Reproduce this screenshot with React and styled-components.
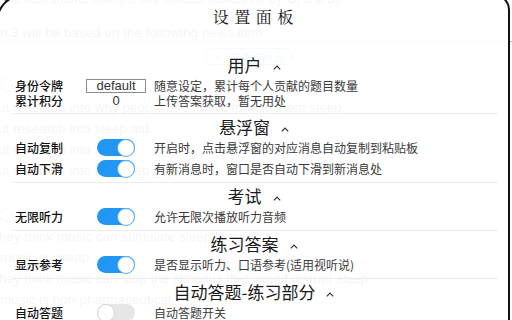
import React from 'react'
import styled, { createGlobalStyle } from 'styled-components'

const GlobalStyle = createGlobalStyle`
  html, body {
    margin: 0;
    padding: 0;
    width: 512px;
    height: 320px;
    overflow: hidden;
    background: #fff;
  }
  body {
    font-family: "Noto Sans CJK SC", "Noto Sans", sans-serif;
  }
`

const Screen = styled.div`
  position: relative;
  width: 512px;
  height: 320px;
  overflow: hidden;
`

/* exam page that sits behind the settings panel */
const Page = styled.div`
  display: flex;
  flex-direction: column;
  font-family: "Liberation Sans", Arial, sans-serif;
  font-size: 13.5px;
  color: #555;
  white-space: nowrap;
`
const Directions = styled.div`
  margin-top: -8px;
  height: 14px;
  line-height: 14px;
  font-size: 12px;
  padding-left: 4px;
`
const Heading = styled.div`
  margin-top: 18px;
  height: 17px;
  line-height: 17px;
  border-bottom: 1px solid #bbb;
`
const PillRow = styled.div`
  margin-top: 6px;
  height: 17px;
  display: flex;
  justify-content: center;
  padding-right: 14px;
`
const Pill = styled.div`
  display: flex;
  align-items: center;
  gap: 3px;
  padding: 0 8px;
  border: 1px solid #4a90e2;
  border-radius: 9px;
  color: #4a90e2;
  font-size: 11px;
  font-family: "Noto Sans CJK SC", sans-serif;
`
const PlayRow = styled.div`
  margin-top: ${p => p.$top}px;
  height: 14px;
  display: flex;
  align-items: center;
`
const PlayDot = styled.span`
  width: 14px;
  height: 14px;
  margin-left: -1px;
  border-radius: 50%;
  border: 1px solid #4a90e2;
  box-sizing: border-box;
`
const Options = styled.div`
  margin-top: ${p => p.$top}px;
  display: flex;
  flex-direction: column;
`
const Option = styled.div`
  height: 21px;
  line-height: 21px;
  margin-left: ${p => p.$shift || 0}px;
`

/* settings panel */
const Panel = styled.div`
  position: absolute;
  top: -6px;
  left: -4px;
  width: 514px;
  height: 345px;
  box-sizing: border-box;
  border: 2px solid #111;
  border-radius: 28px 16px 0 0;
  background: rgba(255, 255, 255, 0.94);
  display: flex;
  flex-direction: column;
  font-family: "Noto Sans CJK SC", "Noto Sans", sans-serif;
`
const Title = styled.div`
  height: 42px;
  line-height: 42px;
  text-align: center;
  font-family: "AR PL UKai CN", "KaiTi", "STKaiti", "Noto Serif CJK SC", "Noto Sans CJK SC", serif;
  font-size: 16px;
  letter-spacing: 5.5px;
  padding-left: 5.5px;
  color: #111;
`
const Sections = styled.div`
  margin: 14px 10px 0 15px;
  display: flex;
  flex-direction: column;
`
const Section = styled.section`
  display: flex;
  flex-direction: column;
  padding-bottom: ${p => p.$pb}px;
  border-bottom: ${p => (p.$last ? 'none' : '1px solid #ececec')};
`
const Header = styled.div`
  height: 25px;
  display: flex;
  align-items: center;
  justify-content: center;
  padding-right: 3px;
  font-size: 17px;
  color: #1a1a1a;
`
const Caret = styled.svg`
  margin-left: 11px;
  margin-top: 5px;
`
const Rows = styled.div`
  display: flex;
  flex-direction: column;
  gap: ${p => p.$gap}px;
`
const Row = styled.div`
  height: ${p => p.$h}px;
  display: grid;
  grid-template-columns: 63px 60px 1fr;
  column-gap: 8px;
  align-items: center;
  padding-left: 2px;
`
const Label = styled.span`
  font-size: 12px;
  font-weight: 500;
  color: #111;
  white-space: nowrap;
`
const Desc = styled.span`
  font-size: 12px;
  color: #3a3a3a;
  white-space: nowrap;
`
const TokenBox = styled.span`
  width: 60px;
  height: 14px;
  box-sizing: border-box;
  border: 1px solid #8a8a8a;
  font-family: "Liberation Sans", Arial, sans-serif;
  font-size: 13px;
  line-height: 12px;
  text-align: center;
  color: #333;
`
const Value = styled.span`
  text-align: center;
  font-family: "Liberation Sans", Arial, sans-serif;
  font-size: 13px;
  color: #333;
`
const Switch = styled.span`
  justify-self: center;
  width: 38px;
  height: 17px;
  border-radius: 9px;
  background: ${p => (p.$on ? '#2196f3' : '#e6e6e6')};
  display: flex;
  align-items: center;
  justify-content: ${p => (p.$on ? 'flex-end' : 'flex-start')};
`
const Knob = styled.span`
  width: 18px;
  height: 18px;
  border-radius: 50%;
  box-sizing: border-box;
  background: #fff;
  border: 1px solid ${p => (p.$on ? '#5aa9ee' : '#d4d4d4')};
`

const ChevronUp = () => (
  <Caret width="8" height="5" viewBox="0 0 8 5">
    <path d="M0.8 4.3 L4 1 L7.2 4.3" fill="none" stroke="#333" strokeWidth="1.2" />
  </Caret>
)

const Toggle = ({ on }) => (
  <Switch $on={on}>
    <Knob $on={on} />
  </Switch>
)

const settings = [
  {
    title: '用户',
    pb: 6,
    gap: 0,
    h: 15,
    rows: [
      { label: '身份令牌', control: <TokenBox>default</TokenBox>, desc: '随意设定，累计每个人贡献的题目数量' },
      { label: '累计积分', control: <Value>0</Value>, desc: '上传答案获取，暂无用处' },
    ],
  },
  {
    title: '悬浮窗',
    pb: 5,
    gap: 4,
    h: 17,
    rows: [
      { label: '自动复制', on: true, desc: '开启时，点击悬浮窗的对应消息自动复制到粘贴板' },
      { label: '自动下滑', on: true, desc: '有新消息时，窗口是否自动下滑到新消息处' },
    ],
  },
  {
    title: '考试',
    pb: 5,
    gap: 4,
    h: 17,
    rows: [{ label: '无限听力', on: true, desc: '允许无限次播放听力音频' }],
  },
  {
    title: '练习答案',
    pb: 5,
    gap: 4,
    h: 17,
    rows: [{ label: '显示参考', on: true, desc: '是否显示听力、口语参考(适用视听说)' }],
  },
  {
    title: '自动答题-练习部分',
    pb: 5,
    gap: 4,
    h: 17,
    last: true,
    rows: [{ label: '自动答题', on: false, desc: '自动答题开关' }],
  },
]

const App = () => {
  return (
    <Screen>
      <GlobalStyle />
      <Page>
        <Directions>the best answer from the four choices marked A), B), C) and D).</Directions>
        <Heading>n 3 will be based on the following news item.</Heading>
        <PillRow>
          <Pill>
            <span>◔</span>1次播放机会
          </Pill>
        </PillRow>
        <PlayRow $top={13}>
          <PlayDot />
        </PlayRow>
        <Options $top={5}>
          <Option $shift={-2}>ut research into why people use music to help them sleep.</Option>
          <Option $shift={-2}>ut research into sleep aid.</Option>
          <Option $shift={-2}>ut research into stress.</Option>
          <Option $shift={-2}>ut research into the sleep gap.</Option>
        </Options>
        <PlayRow $top={27}>
          <PlayDot />
        </PlayRow>
        <Options $top={4}>
          <Option $shift={-1}>hey think music can stimulate sleep loss.</Option>
          <Option>music is cheap.</Option>
          <Option $shift={-1}>hey think music can stop the stimulus that would disrupt sleep.</Option>
          <Option>music is non-pharmaceutical.</Option>
        </Options>
      </Page>

      <Panel>
        <Title>设置面板</Title>
        <Sections>
          {settings.map(sec => (
            <Section key={sec.title} $pb={sec.pb} $last={sec.last}>
              <Header>
                {sec.title}
                <ChevronUp />
              </Header>
              <Rows $gap={sec.gap}>
                {sec.rows.map(row => (
                  <Row key={row.label} $h={sec.h}>
                    <Label>{row.label}</Label>
                    {row.control || <Toggle on={row.on} />}
                    <Desc>{row.desc}</Desc>
                  </Row>
                ))}
              </Rows>
            </Section>
          ))}
        </Sections>
      </Panel>
    </Screen>
  )
}

export default App
